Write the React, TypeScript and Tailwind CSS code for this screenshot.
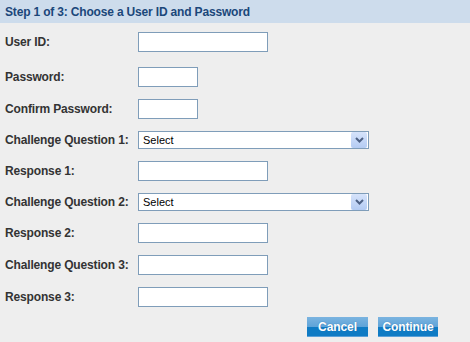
const fieldBox = "h-[20px] border border-[#7f9db9] bg-white";

function TextField({ width }: { width: string }) {
  return <div className={`${fieldBox} ${width}`} />;
}

function SelectField() {
  return (
    <div className="flex h-[18px] w-[231px] items-center justify-between border border-[#7f9db9] bg-white pl-[4px] pr-px">
      <span className="text-[11px] leading-none text-black">Select</span>
      <div className="flex h-[16px] w-[16px] items-center justify-center rounded-[2px] bg-gradient-to-b from-[#d6e3fb] to-[#b4cbf3]">
        <svg width="9" height="6" viewBox="0 0 9 6">
          <path d="M1 1 L4.5 4.5 L8 1" fill="none" stroke="#4d6185" strokeWidth="2" />
        </svg>
      </div>
    </div>
  );
}

function Row({ label, children, className = "" }: { label: string; children: React.ReactNode; className?: string }) {
  return (
    <div className={`flex items-center ${className}`}>
      <div className="w-[133px] text-[12px] font-bold tracking-[-0.15px] text-[#333333]">{label}</div>
      {children}
    </div>
  );
}

function BlueButton({ label, width }: { label: string; width: string }) {
  return (
    <button className={`${width} flex h-[20px] flex-col overflow-hidden text-[12px] font-bold text-white`}>
      <div className="relative flex h-full w-full flex-col">
        <div className="h-[10px] bg-gradient-to-b from-[#7bb4e0] to-[#5ea3d8]" />
        <div className="h-[9px] bg-[#0f7bc4]" />
        <div className="h-px bg-[#5aa0d8]" />
        <span className="absolute inset-0 flex items-center justify-center tracking-[-0.1px] [text-shadow:0_0_1px_#2a6ea8]">
          {label}
        </span>
      </div>
    </button>
  );
}

export default function App() {
  return (
    <div className="h-[342px] w-[470px] bg-[#eeeeee] font-['Liberation_Sans',Arial,sans-serif]">
      <div className="flex h-[23px] items-center bg-[#cddcec] pl-[5px] text-[12px] font-bold tracking-[-0.17px] text-[#1b477a]">
        Step 1 of 3: Choose a User ID and Password
      </div>
      <div className="flex flex-col gap-3 pl-[5px] pt-[9px]">
        <Row label="User ID:">
          <TextField width="w-[130px]" />
        </Row>
        <Row label="Password:" className="mt-[3px]">
          <TextField width="w-[60px]" />
        </Row>
        <Row label="Confirm Password:">
          <TextField width="w-[60px]" />
        </Row>
        <Row label="Challenge Question 1:">
          <SelectField />
        </Row>
        <Row label="Response 1:">
          <TextField width="w-[130px]" />
        </Row>
        <Row label="Challenge Question 2:">
          <SelectField />
        </Row>
        <Row label="Response 2:">
          <TextField width="w-[130px]" />
        </Row>
        <Row label="Challenge Question 3:">
          <TextField width="w-[130px]" />
        </Row>
        <Row label="Response 3:">
          <TextField width="w-[130px]" />
        </Row>
        <div className="-mt-[2px] flex justify-end gap-[10px] pr-[32px]">
          <BlueButton label="Cancel" width="w-[61px]" />
          <BlueButton label="Continue" width="w-[60px]" />
        </div>
      </div>
    </div>
  );
}
